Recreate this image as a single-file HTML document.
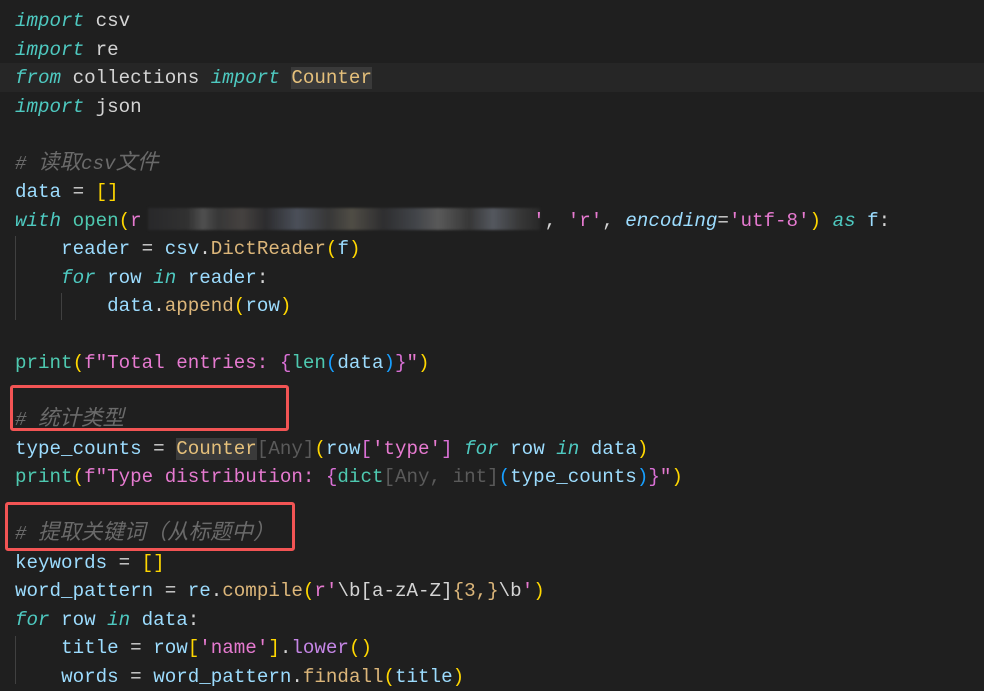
<!DOCTYPE html>
<html><head><meta charset="utf-8"><style>
html,body{margin:0;padding:0;background:#1f1f1f;width:984px;height:684px;overflow:hidden}
#c{position:absolute;left:15px;top:7px;font-family:"Liberation Mono","Noto Sans CJK SC",monospace;font-size:19.2px;line-height:28.52px;color:#d4d4d4;white-space:pre}
.k{color:#4ec9c0;font-style:italic}
.v{color:#9cdcfe}
.f{color:#dcb67a}
.t{color:#4ec9b0}
.cl{color:#e5c07b}
.s{color:#e67ad0}
.cm{color:#6a6a6a;font-style:italic}
.cj{font-size:21.5px;line-height:10px}
.y{color:#ffd700}.p{color:#da70d6}.b{color:#179fff}
.g{color:#5a5a5a}
.w{color:#d4d4d4}
.hl{background:#3a3a3a}
.line{position:absolute;left:0;top:63px;width:984px;height:29px;background:#262626}
.box{position:absolute;border:3px solid #f25454;border-radius:3px}
.ig{position:absolute;width:1px;background:#404040}
.blur{position:absolute;left:148px;top:208px;width:392px;height:22px;background:linear-gradient(90deg,#2a2a2c 0,#333 10%,#555 14%,#3a3a3a 18%,#4a4644 24%,#2e2e30 30%,#505560 38%,#3a3a3a 46%,#55524a 52%,#303032 60%,#45484d 68%,#606060 74%,#3a3a3a 82%,#5a5e66 88%,#3a3a3a 95%,#2a2a2a 100%);opacity:.9;filter:blur(1px)}
</style></head><body>
<div class="line"></div>
<div class="ig" style="left:15px;top:236px;height:84px"></div>
<div class="ig" style="left:61px;top:293px;height:27px"></div>
<div class="ig" style="left:15px;top:636px;height:48px"></div>
<div class="blur"></div>
<div id="c"><span class="k">import</span> csv
<span class="k">import</span> re
<span class="k">from</span> collections <span class="k">import</span> <span class="cl hl">Counter</span>
<span class="k">import</span> json

<span class="cm"># <span class="cj">读取</span>csv<span class="cj">文件</span></span>
<span class="v">data</span> = <span class="y">[]</span>
<span class="k">with</span> <span class="t">open</span><span class="y">(</span><span class="s">r</span>                                  <span class="s">'</span>, <span class="s">'r'</span>, <span class="v" style="font-style:italic">encoding</span>=<span class="s">'utf-8'</span><span class="y">)</span> <span class="k">as</span> <span class="v">f</span>:
    <span class="v">reader</span> = <span class="v">csv</span>.<span class="f">DictReader</span><span class="y">(</span><span class="v">f</span><span class="y">)</span>
    <span class="k">for</span> <span class="v">row</span> <span class="k">in</span> <span class="v">reader</span>:
        <span class="v">data</span>.<span class="f">append</span><span class="y">(</span><span class="v">row</span><span class="y">)</span>

<span class="t">print</span><span class="y">(</span><span class="s">f"Total entries: </span><span class="p">{</span><span class="t">len</span><span class="b">(</span><span class="v">data</span><span class="b">)</span><span class="p">}</span><span class="s">"</span><span class="y">)</span>

<span class="cm"># <span class="cj">统计类型</span></span>
<span class="v">type_counts</span> = <span class="cl hl">Counter</span><span class="g">[Any]</span><span class="y">(</span><span class="v">row</span><span class="p">[</span><span class="s">'type'</span><span class="p">]</span> <span class="k">for</span> <span class="v">row</span> <span class="k">in</span> <span class="v">data</span><span class="y">)</span>
<span class="t">print</span><span class="y">(</span><span class="s">f"Type distribution: </span><span class="p">{</span><span class="t">dict</span><span class="g">[Any, int]</span><span class="b">(</span><span class="v">type_counts</span><span class="b">)</span><span class="p">}</span><span class="s">"</span><span class="y">)</span>

<span class="cm"># <span class="cj">提取关键词（从标题中）</span></span>
<span class="v">keywords</span> = <span class="y">[]</span>
<span class="v">word_pattern</span> = <span class="v">re</span>.<span class="f">compile</span><span class="y">(</span><span class="s">r'</span><span class="w">\b[a-zA-Z]</span><span class="f">{3,}</span><span class="w">\b</span><span class="s">'</span><span class="y">)</span>
<span class="k">for</span> <span class="v">row</span> <span class="k">in</span> <span class="v">data</span>:
    <span class="v">title</span> = <span class="v">row</span><span class="y">[</span><span class="s">'name'</span><span class="y">]</span>.<span class="f" style="color:#c586e6">lower</span><span class="y">()</span>
    <span class="v">words</span> = <span class="v">word_pattern</span>.<span class="f">findall</span><span class="y">(</span><span class="v">title</span><span class="y">)</span></div>
<div class="box" style="left:10px;top:385px;width:273px;height:40px"></div>
<div class="box" style="left:5px;top:502px;width:284px;height:43px"></div>
</body></html>
